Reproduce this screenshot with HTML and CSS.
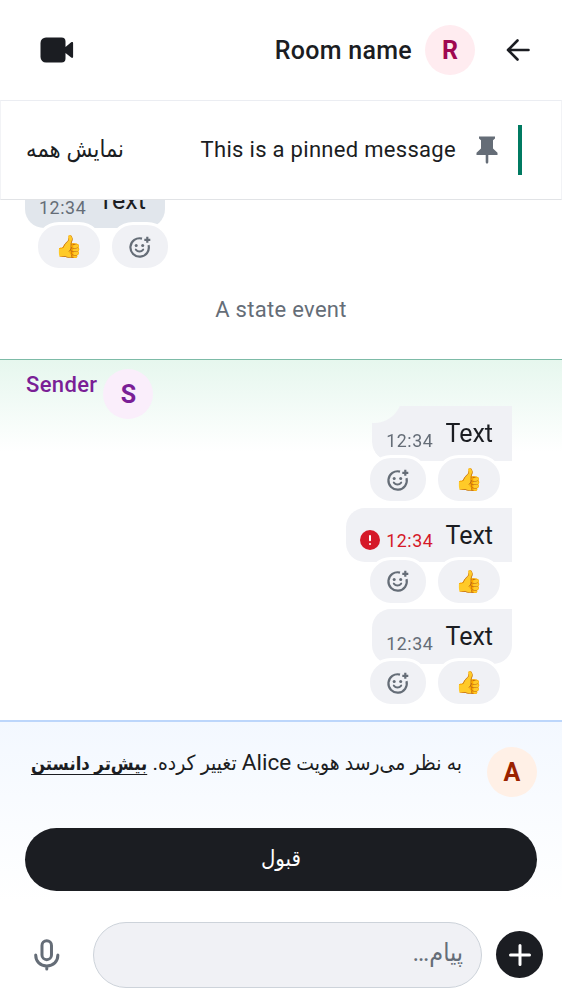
FILE: index.html
```html
<!DOCTYPE html>
<html lang="fa">
<head>
<meta charset="utf-8">
<title>Room name</title>
<link rel="stylesheet" href="styles.css">
</head>
<body>
<svg class="defs" width="0" height="0">
  <symbol id="react" viewBox="0 0 24 24">
    <path fill="none" stroke="currentColor" stroke-width="2.200" d="M14 3.600A9.200 9.200 0 1 0 20.500 10.100"/>
    <circle cx="8.200" cy="10.500" r="1.500" fill="currentColor"/>
    <circle cx="14.700" cy="10.500" r="1.500" fill="currentColor"/>
    <path fill="none" stroke="currentColor" stroke-width="1.900" stroke-linecap="round" d="M7.800 14.600c2 2.500 5.400 2.500 7.400 0"/>
    <path fill="none" stroke="currentColor" stroke-width="2.200" d="M19.300 1.800v6M16.300 4.800h6"/>
  </symbol>
</svg>
<div class="screen">
  <header class="topbar">
    <svg class="video" viewBox="0 0 34 26"><path fill="currentColor" d="M6 .5h15.500a4 4 0 0 1 4 4V10l5.700-4.700c.9-.7 1.900-.4 1.900.7v13.800c0 1.100-1 1.400-1.900.7L25.500 16v5.500a4 4 0 0 1-4 4H6a5.500 5.500 0 0 1-5.500-5.500V6A5.500 5.500 0 0 1 6 .5z"/></svg>
    <h1 class="title">Room name</h1>
    <div class="avatar avatar-r">R</div>
    <svg class="back" viewBox="0 0 24 24"><path fill="none" stroke="currentColor" stroke-width="2.600" stroke-linecap="round" stroke-linejoin="round" d="M11.500 2.500 2 12l9.500 9.500M2 12h20.500"/></svg>
  </header>
  <section class="pinned">
    <span class="view-all" dir="rtl">نمایش همه</span>
    <span class="pin-text">This is a pinned message</span>
    <svg class="pin" viewBox="0 0 22 28"><path fill="currentColor" d="M3 .5h16v2l-2 1.800v8.200l4.500 4.200V19h-9.200v7.500L11 28l-1.300-1.500V19H.5v-2.300L5 12.500V4.300L3 2.500z"/></svg>
    <span class="pin-bar"></span>
  </section>
  <main class="timeline">
    <div class="item mine">
      <div class="bubble"><span class="time">12:34</span><span class="msg">Text</span></div>
      <div class="reactions">
        <span class="chip thumb">👍</span>
        <span class="chip add"><svg><use href="#react"/></svg></span>
      </div>
    </div>
    <div class="state">A state event</div>
    <section class="focused">
      <div class="sender"><span class="name">Sender</span><span class="avatar avatar-s">S</span></div>
      <div class="item">
        <div class="bubble first"><span class="time">12:34</span><span class="msg">Text</span></div>
        <div class="reactions">
          <span class="chip add"><svg><use href="#react"/></svg></span>
          <span class="chip thumb">👍</span>
        </div>
      </div>
      <div class="item">
        <div class="bubble middle"><svg class="error" viewBox="0 0 20 20"><circle cx="10" cy="10" r="10" fill="currentColor"/><path stroke="#fff" stroke-width="2" stroke-linecap="round" d="M10 6v4.200M10 14v.1"/></svg><span class="time failed">12:34</span><span class="msg">Text</span></div>
        <div class="reactions">
          <span class="chip add"><svg><use href="#react"/></svg></span>
          <span class="chip thumb">👍</span>
        </div>
      </div>
      <div class="item">
        <div class="bubble last"><span class="time">12:34</span><span class="msg">Text</span></div>
        <div class="reactions">
          <span class="chip add"><svg><use href="#react"/></svg></span>
          <span class="chip thumb">👍</span>
        </div>
      </div>
    </section>
  </main>
  <section class="identity">
    <div class="notice">
      <p class="notice-text" dir="rtl">به نظر می‌رسد هویت <span class="latin">Alice</span> تغییر کرده. <b>بیش‌تر دانستن</b></p>
      <div class="avatar avatar-a">A</div>
    </div>
    <button class="accept" dir="rtl">قبول</button>
  </section>
  <footer class="composer">
    <svg class="mic" viewBox="0 0 26 32"><g fill="none" stroke="currentColor" stroke-width="3" stroke-linecap="round"><rect x="8" y="1.700" width="9.500" height="19" rx="4.750"/><path d="M1.700 16c0 6.500 4.500 11 11.100 11s11.100-4.500 11.100-11M12.800 27v3"/></g></svg>
    <div class="field" dir="rtl">پیام…</div>
    <div class="plus"><svg viewBox="0 0 22 22"><path stroke="#fff" stroke-width="3" stroke-linecap="round" d="M11 1.500v19M1.500 11h19"/></svg></div>
  </footer>
</div>
</body>
</html>
```
FILE: styles.css
```css
* { box-sizing: border-box; }
body { margin: 0; font-family: Roboto, "DejaVu Sans Condensed", "DejaVu Sans", sans-serif; color: #1b1d22; background: #fff; }
.defs { display: block; height: 0; }
.screen { width: 562px; height: 1000px; display: flex; flex-direction: column; overflow: hidden; }
.topbar { height: 100px; flex: none; display: flex; align-items: center; padding: 0 32px 0 40px; }
.video { width: 34px; height: 26px; }
.title { margin: 1px 13px 0 auto; font-size: 25px; font-weight: 500; letter-spacing: .3px; line-height: 36px; }
.avatar { width: 50px; height: 50px; flex: none; border-radius: 50%; display: flex; align-items: center; justify-content: center; font-size: 25px; font-weight: 700; }
.avatar-r { background: #ffecf0; color: #9f0850; }
.avatar-s { background: #faeefb; color: #7a1f96; }
.avatar-a { background: #fff0e6; color: #9b2200; margin-top: 1px; }
.back { width: 24px; height: 24px; margin-left: 31px; }
.pinned { height: 100px; flex: none; display: flex; align-items: center; padding: 0 39px 0 25px; border: 1px solid #f2f3f6; border-top-color: #ebedf2; border-bottom-color: #e1e3e6; }
.view-all { width: 98px; font-size: 23.500px; line-height: 34px; padding-bottom: 3px; white-space: nowrap; }
.pin-text { margin-left: auto; font-size: 22px; letter-spacing: .3px; padding-bottom: 1px; }
.pin { width: 22px; height: 28px; margin: 0 20px; color: #656d77; }
.pin-bar { width: 4px; height: 50px; background: #007a61; }
.timeline { height: 520px; flex: none; overflow: hidden; display: flex; flex-direction: column; justify-content: flex-end; }
.item { height: 101.600px; flex: none; display: flex; flex-direction: column; align-items: flex-end; padding-right: 50px; }
.bubble { height: 54.500px; flex: none; display: flex; align-items: baseline; padding: 10px 19px 0 14px; background: #f0f1f5; border-radius: 19px; line-height: 36px; }
.first { border-radius: 0 0 0 19px; -webkit-mask: radial-gradient(circle at 2px -11px, transparent 27.500px, #000 28.500px); mask: radial-gradient(circle at 2px -11px, transparent 27.500px, #000 28.500px); }
.middle { border-radius: 19px 0 0 19px; }
.last { border-radius: 19px 0 19px 19px; }
.time { font-size: 17.800px; letter-spacing: .6px; color: #656d77; margin-right: 12px; position: relative; top: 5px; }
.failed { color: #d51928; top: 3.500px; }
.msg { font-size: 25px; letter-spacing: 0; }
.error { width: 20px; height: 20px; color: #d51928; margin-right: 6px; align-self: flex-start; margin-top: 12.500px; }
.reactions { display: flex; gap: 6px; margin-top: -5.500px; padding-right: 9.500px; position: relative; }
.chip { height: 49px; border: 3px solid #fff; border-radius: 24px; background: #f0f1f5; display: flex; align-items: center; justify-content: center; color: #656d77; }
.add { width: 62px; }
.add svg { width: 24px; height: 24px; }
.thumb { width: 68px; font-size: 22px; }
.mine { align-items: flex-start; padding: 0 0 0 25px; height: 98px; }
.mine .bubble { background: #e1e6ec; }
.mine .reactions { padding: 0 0 0 9.500px; }
.state { height: 88px; flex: none; text-align: center; font-size: 22px; letter-spacing: .3px; line-height: 78px; color: #656d77; }
.focused { height: 361px; flex: none; border-top: 1px solid #7dbba7; background: linear-gradient(#e6f7ee, #fff 92px); }
.sender { height: 46px; display: flex; padding: 9px 0 0 26px; color: #7a1f96; }
.name { font-size: 22px; font-weight: 500; letter-spacing: .35px; line-height: 32px; margin-right: 6px; }
.identity { height: 191px; flex: none; border-top: 2px solid #bcd6fb; background: linear-gradient(#f3f8ff, #fff 180px); padding: 24px 25px 0; }
.notice { display: flex; justify-content: flex-end; height: 82px; }
.notice-text { margin: 0 25px 0 0; font-size: 20.900px; line-height: 33px; white-space: nowrap; }
.latin { font-size: 22.500px; }
.notice-text b { font-size: 18.400px; text-decoration: underline; text-decoration-thickness: 1px; text-underline-offset: 4px; }
.accept { display: block; width: 512px; height: 63px; border: 0; border-radius: 32px; background: #1b1d22; color: #fff; font: 22px Roboto, "DejaVu Sans Condensed", "DejaVu Sans", sans-serif; padding-bottom: 4px; }
.composer { display: flex; align-items: center; height: 89px; padding: 0 19px 2px 34px; margin-top: 0; }
.mic { width: 26px; height: 32px; color: #656d77; }
.field { width: 389px; height: 66px; margin: 0 14px 0 33.500px; border: 1px solid #cdd3da; border-radius: 33px; background: #f0f1f5; padding: 0 18px; font-size: 25px; line-height: 60px; color: #656d77; }
.plus { width: 47px; height: 47px; border-radius: 50%; background: #1b1d22; display: flex; align-items: center; justify-content: center; }
.plus svg { width: 22px; height: 22px; }
```
